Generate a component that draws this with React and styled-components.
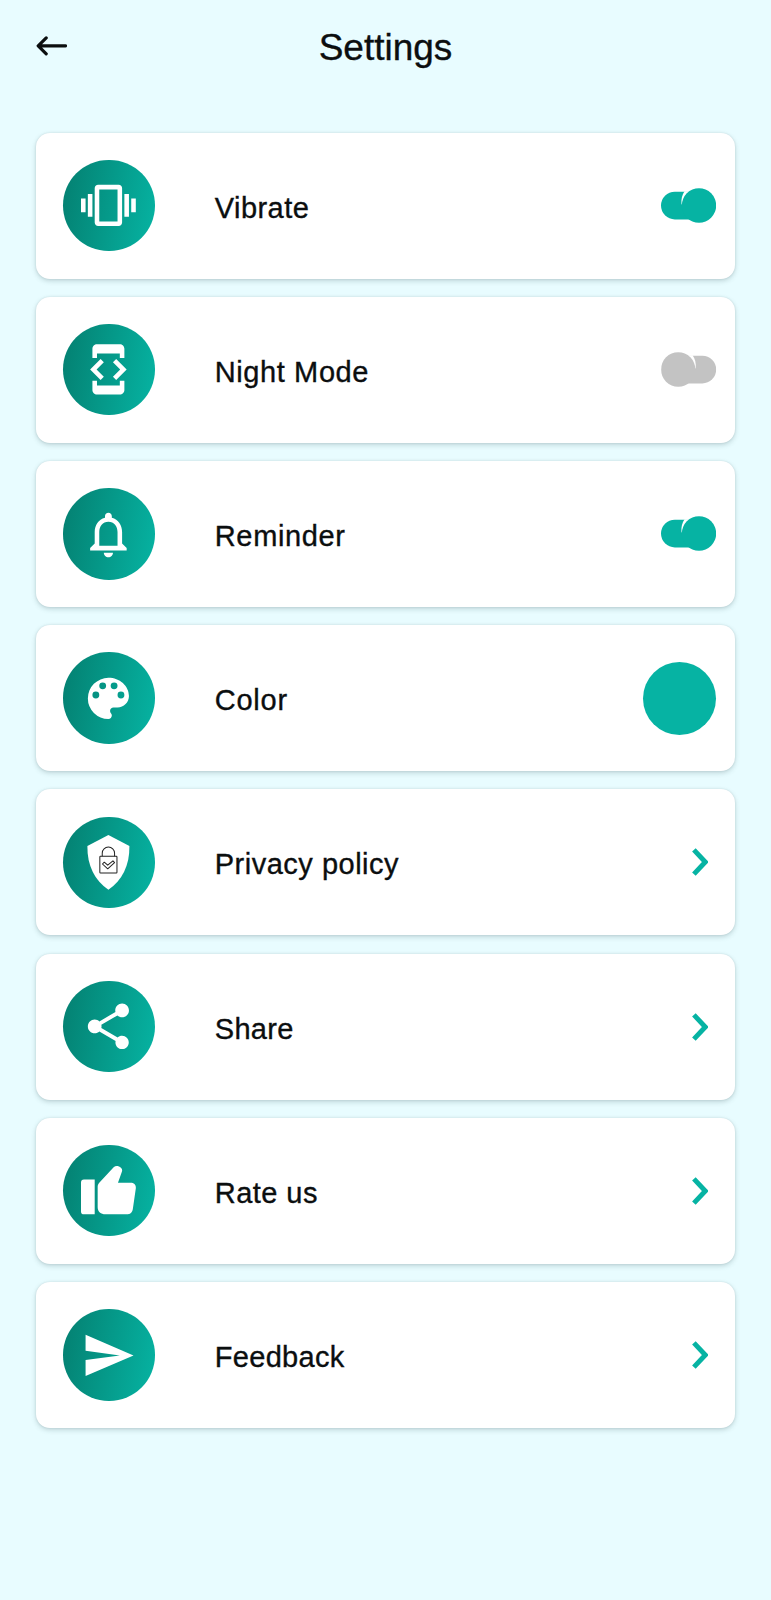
import React, { useState } from "react";
import {
  MdDeveloperMode,
  MdNotificationsNone,
  MdSend,
  MdShare,
  MdVibration
} from "react-icons/md";
import styled, { createGlobalStyle, ThemeProvider } from "styled-components";

const theme = {
  bgColor: "#e8fcff",
  textColor: "#0b0e0f",
  accent: "#06b3a3",
  muted: "#c3c3c3",
  card: {
    bgColor: "#fff",
    shadow: "0 2px 5px rgba(60, 90, 95, 0.24), 0 0 2px rgba(60, 90, 95, 0.16)"
  },
  badge: {
    from: "#047f70",
    to: "#06b4a3"
  }
};

const GlobalStyle = createGlobalStyle`
  * {
    box-sizing: border-box;
  }

  body {
    background-color: ${theme.bgColor};
    margin: 0;
  }
`;

const Screen = styled.main`
  background-color: ${props => props.theme.bgColor};
  color: ${props => props.theme.textColor};
  font-family: "Liberation Sans", Arial, sans-serif;
  min-height: 1600px;
  padding: 0 36.4px;
  -webkit-text-stroke: 0.35px currentColor;
`;

const Header = styled.header`
  align-items: center;
  display: grid;
  grid-template-columns: 60px 1fr 60px;
  height: 132.6px;
  padding-bottom: 38px;
`;

const Title = styled.h1`
  font-size: 37px;
  font-weight: 400;
  line-height: 42px;
  margin: 0;
  padding-top: 2px;
  text-align: center;
`;

const BackButton = styled.button`
  background: none;
  border: 0;
  color: inherit;
  display: flex;
  padding: 0 0 3px;
`;

const List = styled.ul`
  display: flex;
  flex-direction: column;
  gap: 18.2px;
  list-style: none;
  margin: 0;
  padding: 0;
`;

const Card = styled.li`
  align-items: center;
  background-color: ${props => props.theme.card.bgColor};
  border-radius: 14px;
  box-shadow: ${props => props.theme.card.shadow};
  display: flex;
  height: 146px;
  padding: 0 18.4px 0 26.8px;
`;

const Badge = styled.span`
  align-items: center;
  background: linear-gradient(
    100deg,
    ${props => props.theme.badge.from},
    ${props => props.theme.badge.to}
  );
  border-radius: 50%;
  color: #fff;
  display: flex;
  flex: none;
  height: 91.4px;
  justify-content: center;
  padding-right: 0.8px;
  width: 91.4px;

  svg {
    flex: none;
    height: 54.8px;
    width: 54.8px;
  }
`;

const Label = styled.span`
  flex: 1;
  font-size: 29px;
  letter-spacing: ${props => props.$spacing};
  line-height: 34px;
  margin-left: 60.2px;
  padding-top: 4px;
`;

const Swatch = styled.span`
  background-color: ${props => props.theme.accent};
  border-radius: 50%;
  height: 73px;
  width: 73px;
`;

const ToggleButton = styled.button`
  background: none;
  border: 0;
  color: ${props => (props.$on ? props.theme.accent : props.theme.muted)};
  display: flex;
  padding: 0;
  transform: ${props => (props.$on ? "none" : "scaleX(-1)")};
`;

const ChevronSvg = styled.svg`
  color: ${props => props.theme.accent};
  margin-right: 7.8px;
`;

const BackIcon = () => (
  <svg width="31" height="20" viewBox="0 0 31 20" fill="none">
    <path
      d="M29.5 9.800H2.400M10.200 1.900L2.200 9.800l8 8"
      stroke="currentColor"
      strokeLinecap="round"
      strokeLinejoin="round"
      strokeWidth="3.200"
    />
  </svg>
);

const PaletteIcon = () => (
  <svg viewBox="0 0 24 24" fill="currentColor">
    <path d="M12 3a9 9 0 0 0 0 18c.83 0 1.500-.67 1.500-1.500 0-.39-.15-.74-.39-1.010-.23-.26-.38-.61-.38-.99 0-.83.67-1.500 1.500-1.500H16c2.760 0 5-2.240 5-5 0-4.420-4.030-8-9-8zm-5.500 9a1.500 1.500 0 1 1 0-3 1.500 1.500 0 0 1 0 3zm3-4a1.500 1.500 0 1 1 0-3 1.500 1.500 0 0 1 0 3zm5 0a1.500 1.500 0 1 1 0-3 1.500 1.500 0 0 1 0 3zm3 4a1.500 1.500 0 1 1 0-3 1.500 1.500 0 0 1 0 3z" />
  </svg>
);

const ShieldIcon = () => (
  <svg viewBox="0 0 24 24">
    <path
      d="M12 0l9.200 4.800C21.300 13.500 18 19.800 12 24 6 19.800 2.700 13.500 2.800 4.800z"
      fill="currentColor"
    />
    <g fill="none" stroke="#222" strokeWidth=".44" strokeLinejoin="round">
      <rect x="8.250" y="9.300" width="7.500" height="7.300" rx=".3" />
      <path d="M9.300 9.300V8a2.700 2.700 0 0 1 5.400 0v1.300" />
      <path d="M9.400 12.700l.8-.8 1.500 1.300 2.300-1.900.7.800-3 2.700z" />
    </g>
  </svg>
);

const ThumbIcon = () => (
  <svg viewBox="0 0 24 24" fill="currentColor">
    <path d="M1.300 7.200H6v15.300H1.300A1.300 1.300 0 0 1 0 21.200V8.500a1.300 1.300 0 0 1 1.300-1.300z" />
    <path d="M7.300 10.500c0-.7.200-1.300.7-1.800l6.300-6.800c.6-.6 1.300-.8 2.100-.5 1.300.4 1.900 1.400 1.500 2.400l-1.700 4.900h5.500c1.600 0 2.500 1 2.300 2.500l-1.300 8.900c-.2 1.500-1.200 2.400-2.700 2.400h-9.300c-2 0-3.400-1.200-3.400-3.100z" />
  </svg>
);

const ToggleIcon = () => (
  <svg width="55.200" height="35" viewBox="0 0 55.200 35">
    <rect y="3.700" width="48" height="27.700" rx="13.850" fill="currentColor" />
    <path d="M23.600 3.200C21.200 6.500 20 11 20.500 16.500L30 12V3.200z" fill="#fff" />
    <circle cx="38" cy="17.500" r="17.200" fill="currentColor" />
  </svg>
);

const Chevron = () => (
  <ChevronSvg width="16.400" height="28" viewBox="0 0 16.400 28" fill="none">
    <path
      d="M1.900 1.900L13.300 14 1.900 26.100"
      stroke="currentColor"
      strokeWidth="4.900"
    />
  </ChevronSvg>
);

const Toggle = ({ defaultOn, label }) => {
  const [isOn, setIsOn] = useState(defaultOn);

  return (
    <ToggleButton
      $on={isOn}
      aria-checked={isOn}
      aria-label={label}
      onClick={() => setIsOn(!isOn)}
      role="switch"
    >
      <ToggleIcon />
    </ToggleButton>
  );
};

const Setting = ({ children, icon, label, spacing = "0.3px" }) => (
  <Card>
    <Badge>{icon}</Badge>
    <Label $spacing={spacing}>{label}</Label>
    {children}
  </Card>
);

const App = () => (
  <ThemeProvider theme={theme}>
    <GlobalStyle />
    <Screen>
      <Header>
        <BackButton aria-label="Back">
          <BackIcon />
        </BackButton>
        <Title>Settings</Title>
      </Header>
      <List>
        <Setting icon={<MdVibration />} label="Vibrate" spacing="0.45px">
          <Toggle defaultOn label="Vibrate" />
        </Setting>
        <Setting icon={<MdDeveloperMode />} label="Night Mode" spacing="0.6px">
          <Toggle defaultOn={false} label="Night Mode" />
        </Setting>
        <Setting
          icon={<MdNotificationsNone />}
          label="Reminder"
          spacing="0.65px"
        >
          <Toggle defaultOn label="Reminder" />
        </Setting>
        <Setting icon={<PaletteIcon />} label="Color" spacing="0.75px">
          <Swatch />
        </Setting>
        <Setting icon={<ShieldIcon />} label="Privacy policy" spacing="0.5px">
          <Chevron />
        </Setting>
        <Setting icon={<MdShare />} label="Share">
          <Chevron />
        </Setting>
        <Setting icon={<ThumbIcon />} label="Rate us" spacing="0.45px">
          <Chevron />
        </Setting>
        <Setting icon={<MdSend />} label="Feedback">
          <Chevron />
        </Setting>
      </List>
    </Screen>
  </ThemeProvider>
);

export default App;
